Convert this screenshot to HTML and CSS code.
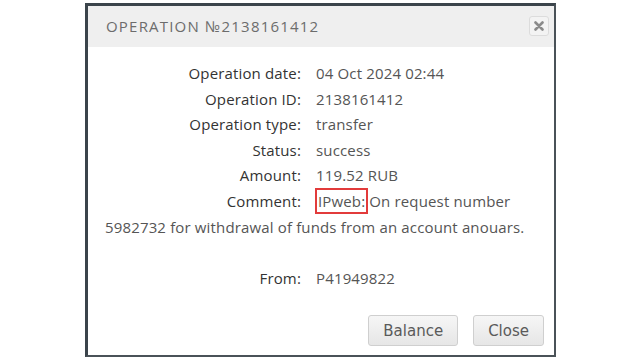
FILE: index.html
```html
<!DOCTYPE html>
<html>
<head>
  <meta charset="utf-8">
  <title>Operation</title>
  <link rel="stylesheet" href="styles.css">
</head>
<body>
  <div class="dialog">
    <div class="dialog-head">
      <span class="dialog-title">OPERATION №2138161412</span>
      <button class="dialog-x" title="close">
        <svg width="10" height="10" viewBox="0 0 10 10"><path d="M1.5 1.5L8.5 8.5M8.5 1.5L1.5 8.5" stroke="#8a8a8a" stroke-width="2.6" stroke-linecap="round"/></svg>
      </button>
    </div>
    <div class="dialog-body">
      <div class="row"><span class="lbl">Operation date:</span><span class="val">04 Oct 2024 02:44</span></div>
      <div class="row"><span class="lbl">Operation ID:</span><span class="val">2138161412</span></div>
      <div class="row"><span class="lbl">Operation type:</span><span class="val">transfer</span></div>
      <div class="row"><span class="lbl">Status:</span><span class="val">success</span></div>
      <div class="row"><span class="lbl">Amount:</span><span class="val">119.52 RUB</span></div>
      <div class="row"><span class="lbl">Comment:</span><span class="mark">IPweb:</span><span>On request number</span></div>
      <div class="row">5982732 for withdrawal of funds from an account anouars.</div>
      <div class="row spacer"></div>
      <div class="row"><span class="lbl">From:</span><span class="val">P41949822</span></div>
    </div>
    <div class="dialog-foot">
      <button class="btn">Balance</button>
      <button class="btn">Close</button>
    </div>
  </div>
</body>
</html>
```

FILE: styles.css
```css
body{
  margin: 0;
  background: #fff;
  font-family: "Open Sans", "Liberation Sans", sans-serif;
}
.dialog{
  width: 466px;
  height: 349px;
  margin: 3px 0 0 85px;
  background: #fff;
  border-top: 3px solid #3b444b;
  border-left: 3px solid #3b444b;
  border-right: 2px solid #4a5258;
  border-bottom: 2px solid #4a5258;
  display: flex;
  flex-direction: column;
}
.dialog-head{
  height: 39px;
  background: #efefef;
  display: flex;
  align-items: center;
  justify-content: space-between;
  padding: 0 5px 2px 18px;
}
.dialog-title{
  font-size: 15px;
  letter-spacing: 1.2px;
  color: #6c6c6c;
}
.dialog-x{
  width: 20px;
  height: 20px;
  padding: 0;
  border: 1px solid #dcdcdc;
  border-radius: 3px;
  background: #f3f3f3;
  display: flex;
  align-items: center;
  justify-content: center;
}
.dialog-body{
  flex: 1;
  padding: 14px 20px 0 17px;
  font-size: 15px;
  line-height: 25.6px;
  letter-spacing: 0.15px;
}
.row{
  color: #555;
}
.spacer{
  height: 25.6px;
}
.lbl{
  display: inline-block;
  width: 196px;
  text-align: right;
  margin-right: 10px;
  color: #333;
}
.val{
  margin-left: 5px;
}
.mark{
  margin-left: 7px;
  margin-right: 4px;
  outline: 2px solid #e23b3b;
  outline-offset: 1px;
}
.dialog-foot{
  display: flex;
  justify-content: flex-end;
  gap: 15px;
  padding: 0 10px 9px 0;
}
.btn{
  font-family: "DejaVu Sans", sans-serif;
  font-size: 15px;
  color: #5a5a5a;
  height: 31px;
  padding: 0 14px;
  border: 1px solid #cfcfcf;
  border-radius: 3px;
  background: linear-gradient(#f6f6f6, #e6e6e6);
}
```
